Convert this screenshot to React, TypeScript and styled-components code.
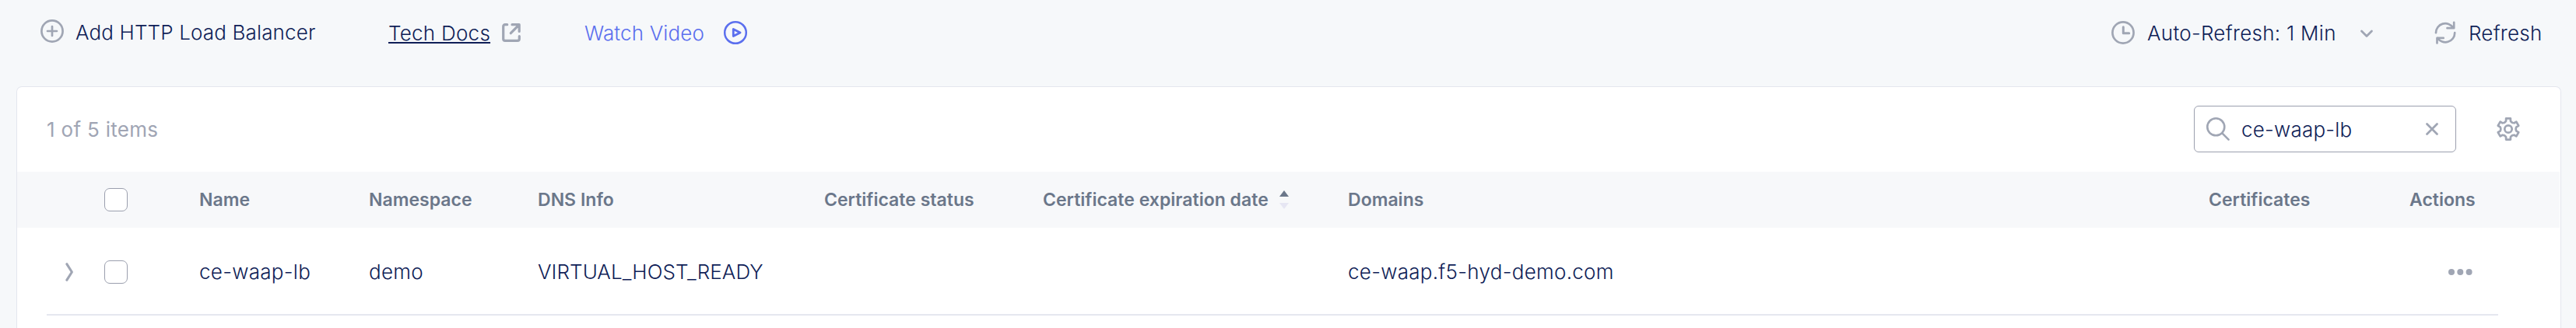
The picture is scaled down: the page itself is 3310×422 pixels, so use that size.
import React from 'react';
import styled, { createGlobalStyle } from 'styled-components';

const Global = createGlobalStyle`
  * { box-sizing: border-box; }
  body { margin: 0; background: #f6f8fa; font-family: Inter, "Liberation Sans", sans-serif; color: #0f1e57; }
  svg { display: block; flex: none; overflow: visible; }
`;

const Page = styled.main`
  height: 422px;
  overflow: hidden;
  display: flex;
  flex-direction: column;
`;

const Toolbar = styled.nav`
  flex: none;
  height: 111px;
  padding: 22px 43px 0 52px;
  display: flex;
  align-items: flex-start;
`;

const Spacer = styled.div`
  flex: 1;
`;

const ToolButton = styled.button<{ $gap: number; $ml?: number; $top?: number; $color?: string }>`
  margin: ${(p) => p.$top ?? 4}px 0 0 ${(p) => p.$ml ?? 0}px;
  padding: 0;
  height: 32px;
  border: 0;
  background: none;
  display: flex;
  align-items: center;
  gap: ${(p) => p.$gap}px;
  color: ${(p) => p.$color ?? '#0f1e57'};
`;

const Label = styled.span<{ $width: number; $underline?: boolean; $spacing?: number; $line?: number }>`
  width: ${(p) => p.$width}px;
  height: 32px;
  font: 350 26px Inter, "Liberation Sans", sans-serif;
  line-height: ${(p) => p.$line ?? 34}px;
  letter-spacing: ${(p) => p.$spacing ?? 0.14}px;
  text-align: left;
  white-space: nowrap;
  text-decoration: ${(p) => (p.$underline ? 'underline' : 'none')};
  text-decoration-thickness: 2px;
  text-underline-offset: 2px;
  text-decoration-skip-ink: none;
`;

const Card = styled.section`
  flex: 1;
  margin: 0 19px 0 21px;
  border: 1px solid #e4e6ee;
  border-bottom: 0;
  border-radius: 7px 7px 0 0;
  background: #fff;
  overflow: hidden;
`;

const CardTop = styled.div`
  height: 109px;
  padding: 24px 52px 0 38px;
  display: flex;
  align-items: flex-start;
`;

const Count = styled.div`
  margin-top: 15px;
  font: 370 26px/32px Inter, "Liberation Sans", sans-serif;
  letter-spacing: 0.3px;
  color: #a0a5b4;
`;

const SearchBox = styled.div`
  width: 337px;
  height: 60px;
  margin-right: 52px;
  padding: 0 22px 0 15px;
  border: 1px solid #9b9fae;
  border-radius: 6px;
  display: flex;
  align-items: center;
`;

const Query = styled(Label)`
  flex: 1;
  margin-left: 15px;
`;

const GearButton = styled.div`
  margin-top: 15px;
`;

const columns = '112px 122px 218px 217px 368px 281px 392px 1106px 258px 1fr';

const HeaderRow = styled.div`
  display: grid;
  grid-template-columns: ${columns};
  align-items: center;
  height: 72px;
  margin-right: 1px;
  background: #f7f8fa;
`;

const HeaderCell = styled.div`
  display: flex;
  align-items: center;
  font: 600 23px/30px Inter, "Liberation Sans", sans-serif;
  letter-spacing: 0.02px;
  color: #6b778a;
  white-space: nowrap;
`;

const Row = styled.div`
  display: grid;
  grid-template-columns: ${columns};
  align-items: center;
  height: 111px;
  padding-top: 3px;
`;

const Divider = styled.div`
  height: 2px;
  margin: 0 80px 0 38px;
  background: #e5e7ef;
`;

const Cell = styled.div<{ $spacing?: number }>`
  font: 345 26px/32px Inter, "Liberation Sans", sans-serif;
  letter-spacing: ${(p) => p.$spacing ?? 0.28}px;
  white-space: nowrap;
`;

const ExpandCell = styled.div`
  padding-left: 62px;
`;

const Check = styled.div`
  width: 30px;
  height: 30px;
  border: 1px solid #9b9fae;
  border-radius: 7px;
  background: #fff;
`;

const Sort = styled.span`
  margin-left: 14px;
`;

const MoreCell = styled.div`
  padding-left: 50px;
`;

const GREY = '#a0a6b4';

// Outline of a six-toothed gear centred on (15, 15).
const gearPath = Array.from({ length: 6 }, (_, i) => {
  const a = ((i * 60 - 90) * Math.PI) / 180;
  return [[8.9, -4.1], [10.4, -2.9], [13.6, -2.9], [13.6, 2.9], [10.4, 2.9], [8.9, 4.1]]
    .map(([r, t]) => {
      const x = 15 + r * Math.cos(a) - t * Math.sin(a);
      const y = 15 + r * Math.sin(a) + t * Math.cos(a);
      return `${x.toFixed(2)} ${y.toFixed(2)}`;
    })
    .join('L');
}).join('L');

const PlusIcon = () => (
  <svg width="30" height="30" fill="none" stroke={GREY} strokeWidth="2.7" strokeLinecap="round">
    <circle cx="15" cy="15" r="13.6" />
    <path d="M15 9v12M9 15h12" />
  </svg>
);
const ExternalIcon = () => (
  <svg width="24" height="24" fill="none" stroke={GREY} strokeWidth="3.2" strokeLinecap="round" strokeLinejoin="round">
    <path d="M6.7 1.7H4Q1.7 1.7 1.7 4v16q0 2.3 2.3 2.3h16q2.3 0 2.3-2.3v-3.4M13 1.7h9.2v8.7M22 1.9L11.3 12.7" />
  </svg>
);
const PlayIcon = () => (
  <svg width="30" height="30" fill="none" stroke="#5b6fee" strokeLinejoin="round">
    <circle cx="15" cy="15" r="13.8" strokeWidth="2.5" />
    <path d="M12.3 10.4v9.2l8.8-4.6z" strokeWidth="2.8" />
  </svg>
);
const ClockIcon = () => (
  <svg width="30" height="30" fill="none" stroke={GREY} strokeLinecap="round" strokeLinejoin="round">
    <circle cx="15" cy="15" r="13.6" strokeWidth="2.7" />
    <path d="M15.3 7.8v8h7.4" strokeWidth="3" />
  </svg>
);
const ChevronDown = () => (
  <svg width="16" height="10" fill="none" stroke={GREY} strokeWidth="2.8" strokeLinecap="round" strokeLinejoin="round">
    <path d="M1.5 3L8 9.5l6.5-6.5" />
  </svg>
);
const RefreshIcon = () => (
  <svg width="28" height="30" fill="none" stroke={GREY} strokeWidth="2.7" strokeLinecap="round" strokeLinejoin="round">
    <path d="M2 15.2A12 12 0 0 1 24.2 8.8M25.2 1.8V9.2H16.5M26.2 15.2A12 12 0 0 1 4 21.6M3.5 28.4V21.9H11.7" />
  </svg>
);
const SearchIcon = () => (
  <svg width="30" height="30" fill="none" stroke={GREY} strokeWidth="2.6" strokeLinecap="round">
    <circle cx="12.3" cy="12.3" r="11" />
    <path d="M20.6 20.6L28.6 28.6" />
  </svg>
);
const CloseIcon = () => (
  <svg width="16" height="16" fill="none" stroke={GREY} strokeWidth="2.8" strokeLinecap="round">
    <path d="M1.5 1.5l13 13M14.5 1.5l-13 13" />
  </svg>
);
const GearIcon = () => (
  <svg width="30" height="30" fill="none" stroke={GREY} strokeWidth="2.7" strokeLinejoin="round">
    <path d={`M${gearPath}z`} />
    <circle cx="15" cy="15" r="4.7" />
  </svg>
);
const ChevronRight = () => (
  <svg width="10" height="24" fill="none" stroke={GREY} strokeWidth="3.1" strokeLinecap="round" strokeLinejoin="round">
    <path d="M1.8 1.7L8.4 12 1.8 22.3" />
  </svg>
);
const SortIcon = () => (
  <svg width="12" height="24">
    <path d="M0 8L6 0l6 8z" fill="#6b778a" />
    <path d="M0 16h12l-6 8z" fill="#e6e6f3" />
  </svg>
);
const DotsIcon = () => (
  <svg width="31" height="8" fill={GREY}>
    <circle cx="4" cy="4" r="4" />
    <circle cx="15.3" cy="4" r="4" />
    <circle cx="26.6" cy="4" r="4" />
  </svg>
);

export default function App() {
  return (
    <Page>
      <Global />
      <Toolbar>
        <ToolButton $gap={15} $top={2}><PlusIcon /><Label $width={311} $line={36}>Add HTTP Load Balancer</Label></ToolButton>
        <ToolButton $gap={15} $ml={91}><Label $width={131} $underline $spacing={0.25}>Tech Docs</Label><ExternalIcon /></ToolButton>
        <ToolButton $gap={23} $ml={82} $color="#5b6fee"><Label $width={156}>Watch Video</Label><PlayIcon /></ToolButton>
        <Spacer />
        <ToolButton $gap={16}><ClockIcon /><Label $width={258} $spacing={0.28}>Auto-Refresh: 1 Min</Label><ChevronDown /></ToolButton>
        <ToolButton $gap={16} $ml={79}><RefreshIcon /><Label $width={95} $spacing={0.22}>Refresh</Label></ToolButton>
      </Toolbar>
      <Card>
        <CardTop>
          <Count>1 of 5 items</Count>
          <Spacer />
          <SearchBox><SearchIcon /><Query $width={140} $spacing={0.22}>ce-waap-lb</Query><CloseIcon /></SearchBox>
          <GearButton><GearIcon /></GearButton>
        </CardTop>
        <HeaderRow>
          <span />
          <Check />
          <HeaderCell>Name</HeaderCell>
          <HeaderCell>Namespace</HeaderCell>
          <HeaderCell>DNS Info</HeaderCell>
          <HeaderCell>Certificate status</HeaderCell>
          <HeaderCell>Certificate expiration date<Sort><SortIcon /></Sort></HeaderCell>
          <HeaderCell>Domains</HeaderCell>
          <HeaderCell>Certificates</HeaderCell>
          <HeaderCell>Actions</HeaderCell>
        </HeaderRow>
        <Row>
          <ExpandCell><ChevronRight /></ExpandCell>
          <Check />
          <Cell>ce-waap-lb</Cell>
          <Cell>demo</Cell>
          <Cell $spacing={0.08}>VIRTUAL_HOST_READY</Cell>
          <span />
          <span />
          <Cell>ce-waap.f5-hyd-demo.com</Cell>
          <span />
          <MoreCell><DotsIcon /></MoreCell>
        </Row>
        <Divider />
      </Card>
    </Page>
  );
}
